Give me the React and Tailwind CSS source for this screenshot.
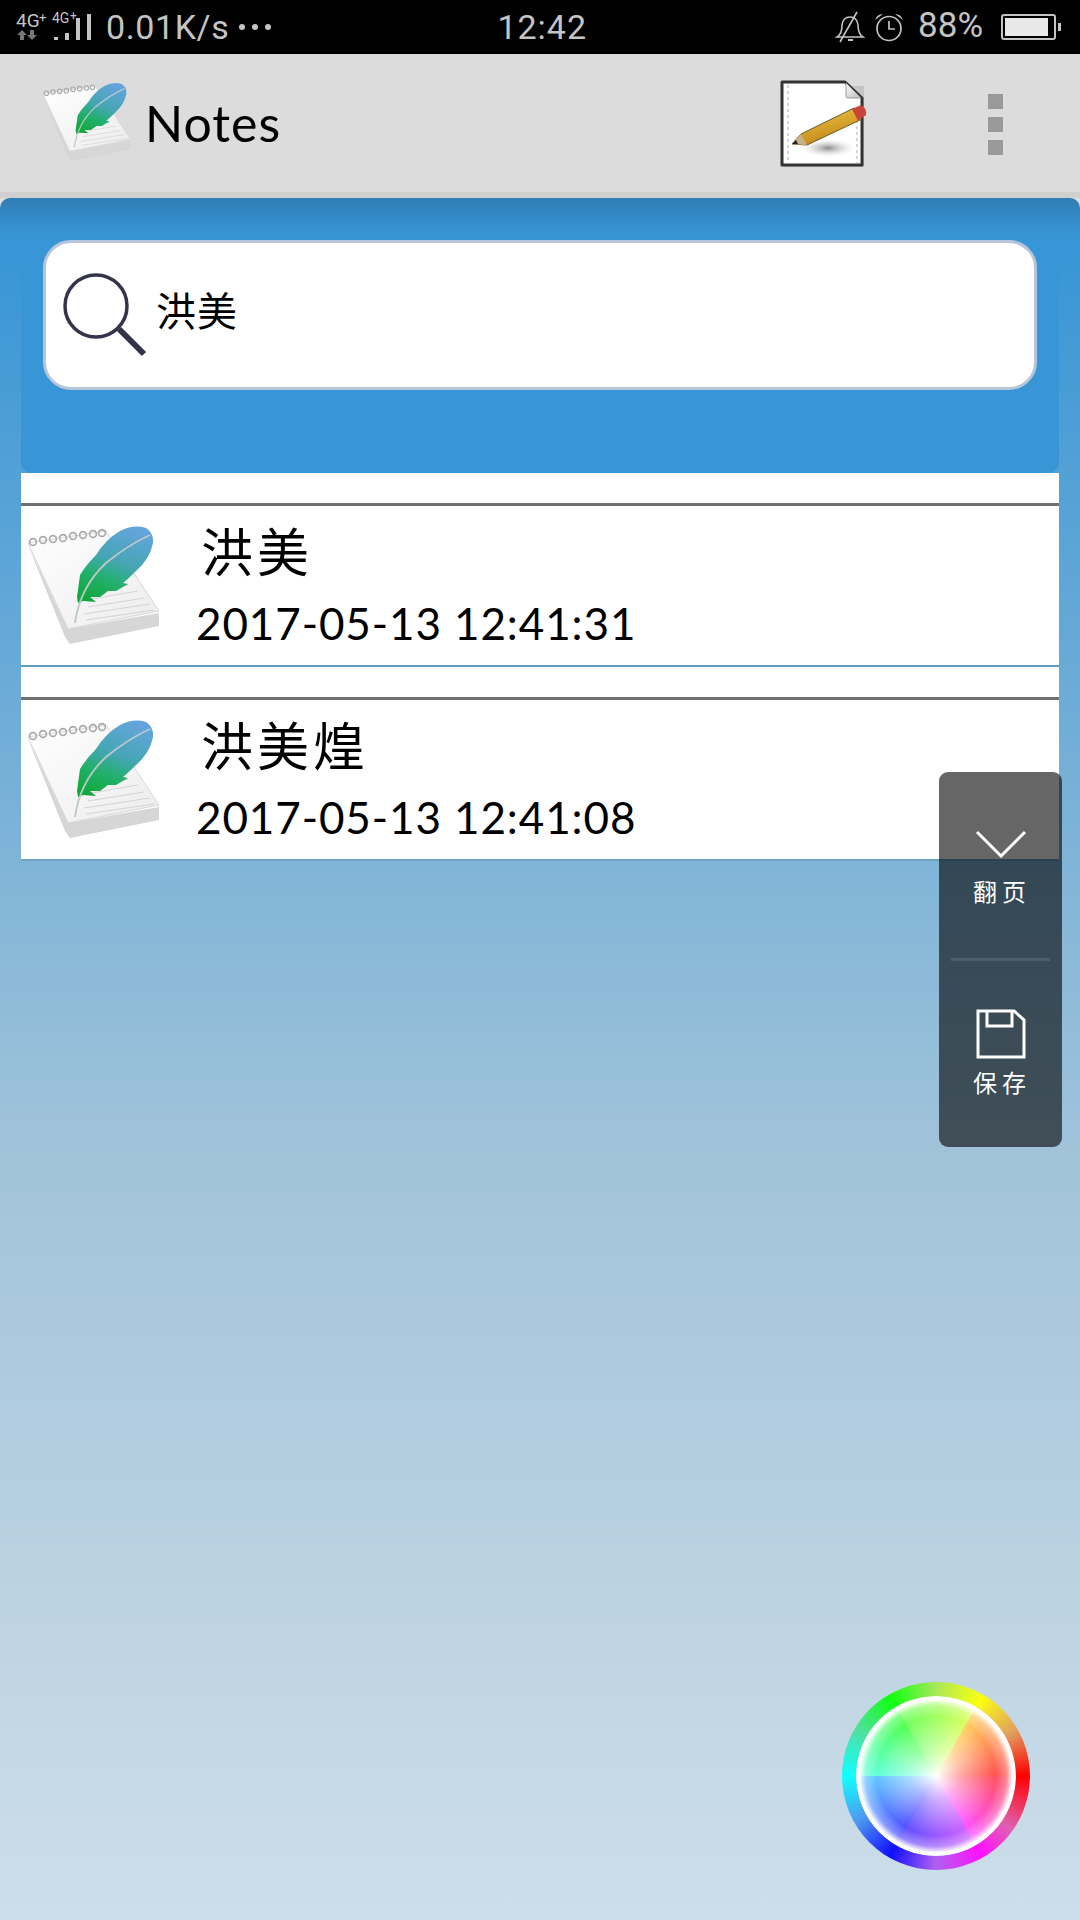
import React from 'react';

const cjk = "font-['Noto_Sans_CJK_SC','Lato',sans-serif]";

// notebook + feather logo, used in the header and in every row
const FeatherNote = ({ id, className }) => (
  <svg viewBox="0 0 132 120" className={className}>
    <defs>
      <linearGradient id={`${id}-f`} x1="0.7" y1="0" x2="0.3" y2="1">
        <stop offset="0" stopColor="#64a4dc" />
        <stop offset="0.45" stopColor="#45a6b4" />
        <stop offset="0.72" stopColor="#21b06a" />
        <stop offset="1" stopColor="#12a83e" />
      </linearGradient>
      <linearGradient id={`${id}-p`} x1="0" y1="0" x2="1" y2="1">
        <stop offset="0" stopColor="#ffffff" />
        <stop offset="1" stopColor="#ececec" />
      </linearGradient>
    </defs>
    <path d="M0 20 L37 112 L42 119 L131 101 L131 88 L40 104 Z" fill="#d6d6d6" />
    <path d="M0 18 L78 6 L131 86 L40 104 Z" fill={`url(#${id}-p)`} stroke="#d6d6d6" strokeWidth="1" />
    <g stroke="#d0d0d0" strokeWidth="1" opacity="0.9">
      <path d="M55 68 L100 60" />
      <path d="M58 75 L110 66" />
      <path d="M60 82 L116 73" />
      <path d="M56 89 L122 79" />
      <path d="M58 95 L126 85" />
    </g>
    <g fill="none" stroke="#a9a9a9" strokeWidth="1.6">
      <circle cx="5" cy="17" r="3.4" />
      <circle cx="15" cy="15" r="3.4" />
      <circle cx="25" cy="14" r="3.4" />
      <circle cx="35" cy="13" r="3.4" />
      <circle cx="45" cy="11" r="3.4" />
      <circle cx="55" cy="10" r="3.4" />
      <circle cx="65" cy="9" r="3.4" />
      <circle cx="74" cy="8" r="3.4" />
    </g>
    <path
      d="M49 72 L52 50 Q58 40 68 30 Q78 14 92 6 Q106 -1 118 3 Q126 8 125 18 Q122 34 108 46 Q100 54 95 58 L100 59 L88 66 L80 66 L72 72 L62 72 L68 77 L55 76 L50 78 Z"
      fill={`url(#${id}-f)`}
    />
    <path d="M47 98 Q52 62 78 38 Q100 20 122 10" fill="none" stroke="#bcc8ca" strokeWidth="1.8" />
  </svg>
);

const SearchIcon = () => (
  <svg viewBox="0 0 84 84" className="w-[84px] h-[84px]" fill="none" stroke="#33344a">
    <circle cx="33" cy="33" r="31" strokeWidth="3.5" />
    <path d="M56 56 L81 81" strokeWidth="6" />
  </svg>
);

const NewNoteIcon = () => (
  <svg viewBox="0 0 88 88" className="w-[88px] h-[88px] blur-[0.5px]">
    <defs>
      <linearGradient id="pencil" x1="0" y1="0" x2="0.4" y2="1">
        <stop offset="0" stopColor="#f2c84a" />
        <stop offset="1" stopColor="#c28a18" />
      </linearGradient>
      <radialGradient id="pshadow">
        <stop offset="0" stopColor="#8a8a8a" />
        <stop offset="1" stopColor="#ffffff" stopOpacity="0" />
      </radialGradient>
      <linearGradient id="fold" x1="0" y1="0" x2="1" y2="1">
        <stop offset="0" stopColor="#ffffff" />
        <stop offset="1" stopColor="#b9b9b9" />
      </linearGradient>
    </defs>
    <path d="M4 6 H84 V87 H4 Z" fill="#b5b5b5" opacity="0.6" />
    <path d="M2 2 H65 L82 18 V85 H2 Z" fill="#ffffff" stroke="#333333" strokeWidth="3" strokeLinejoin="round" />
    <path d="M66 3 V16 Q66 18 68 18 H81 Z" fill="url(#fold)" stroke="#999999" strokeWidth="1" />
    <path d="M8 5 V83 M77 40 V83" stroke="#c4c4c4" strokeWidth="1.4" strokeDasharray="3 3" />
    <ellipse cx="48" cy="68" rx="30" ry="10" fill="url(#pshadow)" />
    <path d="M12 64 L21 54 L74 28 L80 40 L27 65 Z" fill="url(#pencil)" stroke="#6b5a25" strokeWidth="1" />
    <path d="M12 64 L21 54 L27 65 Z" fill="#c9b08c" />
    <path d="M12 64 L16 60 L18 64 Z" fill="#222222" />
    <path d="M72 29 L81 25 Q87 28 86 35 L78 41 Z" fill="#c8453a" />
  </svg>
);

const StatusBar = () => (
  <div className="h-[54px] bg-black flex items-center pl-[15px] text-[#c4c4c4] font-['Roboto',sans-serif]">
    <svg viewBox="0 0 78 42" className="w-[78px] h-[42px] shrink-0" fill="#c4c4c4">
      <text x="1" y="21" fontSize="19" fontFamily="Roboto, sans-serif">4G</text>
      <text x="24" y="16" fontSize="13" fontFamily="Roboto, sans-serif">+</text>
      <text x="37" y="17" fontSize="14" fontFamily="Roboto, sans-serif">4G</text>
      <text x="55" y="14" fontSize="12" fontFamily="Roboto, sans-serif">+</text>
      <path d="M7 24 L12 29 H9 V34 H5 V29 H2 Z M17 34 L12 29 H15 V24 H19 V29 H22 Z" fill="#777777" />
      <rect x="39" y="31" width="4" height="3" />
      <rect x="50" y="27" width="4" height="7" />
      <rect x="61" y="12" width="4" height="22" />
      <rect x="72" y="8" width="4" height="26" />
    </svg>
    <span className="text-[34px] tracking-[0.6px] ml-[13px] leading-none">0.01K/s</span>
    <span className="flex gap-[7px] ml-[10px]">
      <span className="w-[6px] h-[6px] rounded-full bg-[#c4c4c4]" />
      <span className="w-[6px] h-[6px] rounded-full bg-[#c4c4c4]" />
      <span className="w-[6px] h-[6px] rounded-full bg-[#c4c4c4]" />
    </span>
    <span className="text-[34px] tracking-[1px] leading-none ml-[226px]">12:42</span>
    <svg viewBox="0 0 30 32" className="w-[30px] h-[32px] ml-[248px] shrink-0" fill="none" stroke="#c4c4c4" strokeWidth="1.6">
      <path d="M2 26 Q7 23 7 14 Q8 6 15 6 Q22 6 23 14 Q23 23 28 26 Z" />
      <path d="M22 1 L5 31" />
      <path d="M13 29 H18" strokeWidth="2" />
    </svg>
    <svg viewBox="0 0 30 30" className="w-[30px] h-[30px] ml-[9px] shrink-0" fill="none" stroke="#c4c4c4" strokeWidth="1.7">
      <circle cx="15" cy="16.5" r="12" />
      <path d="M15 9 V17 H21" />
      <path d="M1 8 Q3 2 9 2 Z M29 8 Q27 2 21 2 Z" fill="#c4c4c4" stroke="none" />
    </svg>
    <span className="text-[35px] leading-none ml-[14px] mt-[-3px]">88%</span>
    <span className="flex items-center ml-[18px]">
      <span className="w-[55px] h-[26px] border-2 border-[#c4c4c4] rounded-[3px] p-[2px] pr-[6px] flex">
        <span className="flex-1 bg-[#e8e8e8]" />
      </span>
      <span className="w-[3px] h-[8px] bg-[#c4c4c4] ml-[2px]" />
    </span>
  </div>
);

const Header = () => (
  <div className="h-[144px] bg-[#dcdcdc] border-b-[6px] border-[#d0d0d0] flex items-center pl-[43px]">
    <FeatherNote id="head" className="w-[88px] h-[80px] mt-[-2px] blur-[0.5px]" />
    <span className="text-[50px] leading-none text-black font-['Lato',sans-serif] ml-[14px] tracking-[1px]">Notes</span>
    <div className="ml-[499px] mt-[1px]">
      <NewNoteIcon />
    </div>
    <div className="ml-[120px] flex flex-col gap-[8px] mt-[2px]">
      <span className="w-[15px] h-[15px] bg-[#999999]" />
      <span className="w-[15px] h-[15px] bg-[#999999]" />
      <span className="w-[15px] h-[15px] bg-[#999999]" />
    </div>
  </div>
);

const NoteRow = ({ id, title, date, lineColor }) => (
  <div className="bg-white">
    <div className="h-[30px]" />
    <div className={`border-t-[3px] border-[#707070] border-b-2 ${lineColor} h-[164px] flex`}>
      <FeatherNote id={id} className="w-[132px] h-[120px] ml-[7px] mt-[19px] shrink-0 blur-[0.6px]" />
      <div className="ml-[36px] flex flex-col">
        <span className={`${cjk} text-[52px] leading-[52px] mt-[18px] ml-[5px] tracking-[4px] text-black`}>{title}</span>
        <span className="font-['Lato',sans-serif] text-[44px] leading-[44px] mt-[25px] text-black tracking-[0.9px]">{date}</span>
      </div>
    </div>
  </div>
);

const SidePanel = () => (
  <div className="absolute left-[939px] top-[772px] w-[123px] h-[375px] rounded-[9px] bg-black/60 flex flex-col items-center text-white">
    <svg viewBox="0 0 52 28" className="w-[52px] h-[28px] mt-[58px]" fill="none" stroke="#ffffff" strokeWidth="3">
      <path d="M2 2 L26 26 L50 2" />
    </svg>
    <span className={`${cjk} text-[24px] leading-[28px] tracking-[5px] ml-[3px] mt-[19px]`}>翻页</span>
    <div className="w-[99px] h-[3px] bg-[#4a5f6b] mt-[53px]" />
    <svg viewBox="0 0 50 50" className="w-[50px] h-[50px] mt-[48px]" fill="none" stroke="#ffffff" strokeWidth="3">
      <path d="M2 2 H38 L48 11 V48 H2 Z" />
      <path d="M11 2 V17 H36 V2" />
    </svg>
    <span className={`${cjk} text-[24px] leading-[28px] tracking-[5px] ml-[3px] mt-[9px]`}>保存</span>
  </div>
);

const ColorWheel = () => (
  <div className="absolute left-[842px] top-[1682px] w-[188px] h-[188px] rounded-full p-[14px] bg-[conic-gradient(#a8e85a_0deg,#fbff10_30deg,#e0a060_60deg,#ff0000_90deg,#e060b0_125deg,#ff10ff_150deg,#b060f0_180deg,#1010ff_210deg,#5098f0_240deg,#10ffff_270deg,#50e0a0_300deg,#10ff10_330deg,#a8e85a_360deg)]">
    <div className="relative w-full h-full rounded-full overflow-hidden bg-[conic-gradient(#a0ff60_0deg,#d8ff60_30deg,#ffd060_30deg,#ff5050_90deg,#ff5060_90deg,#ff50ff_150deg,#d060ff_150deg,#6050ff_210deg,#5050ff_210deg,#60c8ff_270deg,#60ffd8_270deg,#50ff50_330deg,#70ff60_330deg,#a0ff60_360deg)]">
      <div className="absolute inset-0 rounded-full bg-[radial-gradient(circle_closest-side,#ffffff_0%,rgba(255,255,255,0.5)_30%,rgba(255,255,255,0)_74%,rgba(255,255,255,0.3)_88%,#ffffff_96%)]" />
    </div>
  </div>
);

export default function App() {
  return (
    <div className="relative w-[1080px] h-[1920px] overflow-hidden bg-[#dcdcdc] font-['Lato',sans-serif]">
      <StatusBar />
      <Header />
      <div className="h-[1722px] rounded-t-[10px] px-[21px] bg-[linear-gradient(#2f7db6_0px,#3996d6_38px,#3996d6_60px,#82b5d7_680px,#a0c3da_949px,#c0d5e3_1462px,#cddeea_100%)]">
        <div className="h-[275px] rounded-b-[10px] bg-[linear-gradient(#2f7db6_0px,#3996d6_38px)] pt-[42px] pl-[22px] pr-[22px]">
          <div className="h-[150px] bg-white border-[3px] border-[#b8c4da] rounded-[28px] flex items-center pl-[17px]">
            <SearchIcon />
            <span className={`${cjk} text-[40px] leading-none text-black ml-[9px] tracking-[1px] mt-[-12px]`}>洪美</span>
          </div>
        </div>
        <NoteRow id="row1" title="洪美" date="2017-05-13 12:41:31" lineColor="border-b-[#5e9cc4]" />
        <NoteRow id="row2" title="洪美煌" date="2017-05-13 12:41:08" lineColor="border-b-[#6fa3c4]" />
      </div>
      <SidePanel />
      <ColorWheel />
    </div>
  );
}
